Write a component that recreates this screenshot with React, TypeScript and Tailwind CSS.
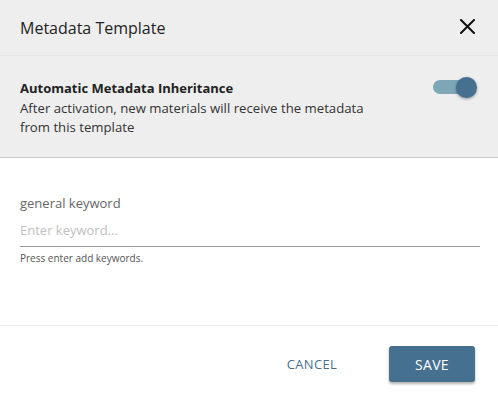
export default function App() {
  return (
    <div
      className="flex h-[414px] w-[498px] flex-col bg-white text-[#222]"
      style={{ fontFamily: '"Open Sans", "Noto Sans", sans-serif' }}
    >
      <div className="flex h-[56px] items-center justify-between border-b border-[#e6e6e6] bg-[#eeeeee] pl-5 pr-[23px]">
        <div className="text-[16px] text-[#222]">Metadata Template</div>
        <svg width="15" height="15" viewBox="0 0 15 15" className="mt-[-2px] text-[#111]">
          <path d="M1 1 L14 14 M14 1 L1 14" stroke="currentColor" strokeWidth="2" strokeLinecap="square" />
        </svg>
      </div>

      <div className="flex items-start justify-between border-b border-[#cccccc] bg-[#eeeeee] pb-[19px] pl-5 pr-[21px] pt-[23px]">
        <div className="text-[13px] leading-[19.5px]">
          <div className="font-bold text-[#222]">Automatic Metadata Inheritance</div>
          <div className="text-[13.2px] text-[#333]">
            After activation, new materials will receive the metadata
            <br />
            from this template
          </div>
        </div>
        <div className="relative mt-[-2px] h-[20px] w-[45px]">
          <div className="absolute left-[1px] top-[3px] h-[14px] w-[34px] rounded-full bg-[#7fa6b6]" />
          <div className="absolute right-0 top-0 h-[21px] w-[21px] rounded-full bg-[#46708f] shadow-[0_1px_3px_rgba(0,0,0,0.4)]" />
        </div>
      </div>

      <div className="flex-1 pl-5 pr-[18px] pt-[36px]">
        <div className="text-[13px] leading-[18px] text-[#666]">general keyword</div>
        <div className="mt-[9px] border-b border-[#999] pb-[7px] text-[13px] leading-[18px] text-[#c0c0c0]">
          Enter keyword...
        </div>
        <div className="mt-[4px] text-[10px] leading-[14px] text-[#555]">
          Press enter add keywords.
        </div>
      </div>

      <div className="flex h-[89px] items-start justify-end border-t border-[#eeeeee] pr-[23px] pt-[20px]">
        <button className="mr-[52px] mt-[9px] text-[13px] leading-[18px] tracking-[0.3px] text-[#4a7090]">
          CANCEL
        </button>
        <button className="h-[36px] w-[86px] rounded-[3px] bg-[#46708f] text-[14px] tracking-[0.3px] text-white shadow-[0_2px_3px_rgba(0,0,0,0.3)]">
          SAVE
        </button>
      </div>
    </div>
  );
}
